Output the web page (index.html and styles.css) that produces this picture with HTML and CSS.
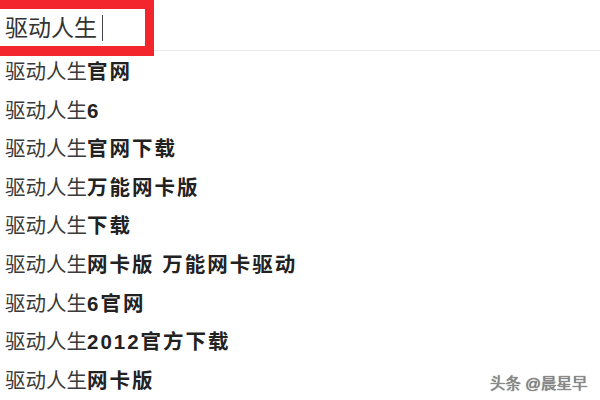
FILE: index.html
```html
<!DOCTYPE html>
<html lang="zh-CN">
<head>
    <meta charset="UTF-8">
    <meta name="viewport" content="width=device-width, initial-scale=1.0">
    <title>驱动人生</title>
    <link rel="stylesheet" href="styles.css">
</head>
<body>
    <div class="search">
        <div class="query"><span class="query-text">驱动人生</span></div>
    </div>
    <ul class="suggestions">
        <li>驱动人生<b>官网</b></li>
        <li>驱动人生<b>6</b></li>
        <li>驱动人生<b>官网下载</b></li>
        <li>驱动人生<b>万能网卡版</b></li>
        <li>驱动人生<b>下载</b></li>
        <li>驱动人生<b>网卡版 万能网卡驱动</b></li>
        <li>驱动人生<b>6官网</b></li>
        <li>驱动人生<b>2012官方下载</b></li>
        <li>驱动人生<b>网卡版</b></li>
    </ul>
    <div class="watermark">头条 @晨星早</div>
</body>
</html>
```

FILE: styles.css
```css
body {
    font-family: "Liberation Sans", "Noto Sans CJK SC", sans-serif;
    margin: 0;
    padding: 0;
    background: #fff;
    color: #333;
    width: 600px;
    height: 400px;
    overflow: hidden;
}
.search {
    height: 50px;
    border-bottom: 1px solid #ebebeb;
}
.query {
    position: relative;
    z-index: 1;
    width: 145px;
    height: 37px;
    border: 9px solid #f4262d;
    border-bottom-width: 10px;
    border-left: none;
    background: #fff;
    display: flex;
    align-items: center;
}
.query-text {
    font-size: 23px;
    line-height: 26px;
    margin-left: 5px;
    padding-right: 5px;
    border-right: 1px solid #444;
    color: #333;
}
.suggestions {
    list-style: none;
    margin: 0;
    padding: 2px 0 0 5px;
}
.suggestions li {
    font-size: 20.5px;
    line-height: 38.6px;
    white-space: nowrap;
    color: #3a3a3a;
}
.suggestions b {
    color: #222;
    letter-spacing: 2px;
}
.watermark {
    position: absolute;
    left: 490px;
    top: 371px;
    font-size: 15.5px;
    color: #8a8a8a;
    text-shadow: 0 0 1px #333;
}
```
